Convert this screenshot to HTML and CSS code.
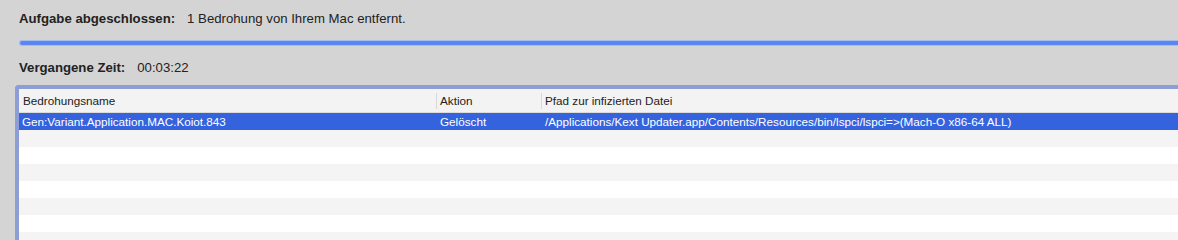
FILE: index.html
```html
<!DOCTYPE html>
<html lang="de">
  <head>
    <meta charset="UTF-8" />
    <title>Scan abgeschlossen</title>
    <link rel="stylesheet" href="styles.css">
  </head>
  <body>
    <div class="panel">
      <div class="line">
        <span class="label">Aufgabe abgeschlossen:</span>
        <span class="value">1 Bedrohung von Ihrem Mac entfernt.</span>
      </div>
      <div class="progress"><div class="fill"></div></div>
      <div class="line elapsed">
        <span class="label">Vergangene Zeit:</span>
        <span class="value">00:03:22</span>
      </div>
      <div class="table-wrap">
        <table class="results">
          <colgroup>
            <col class="c-name" />
            <col class="c-action" />
            <col />
          </colgroup>
          <thead>
            <tr>
              <th>Bedrohungsname</th>
              <th>Aktion</th>
              <th>Pfad zur infizierten Datei</th>
            </tr>
          </thead>
          <tbody>
            <tr class="selected">
              <td>Gen:Variant.Application.MAC.Koiot.843</td>
              <td>Gelöscht</td>
              <td>/Applications/Kext Updater.app/Contents/Resources/bin/lspci/lspci=&gt;(Mach-O x86-64 ALL)</td>
            </tr>
            <tr><td></td><td></td><td></td></tr>
            <tr><td></td><td></td><td></td></tr>
            <tr><td></td><td></td><td></td></tr>
            <tr><td></td><td></td><td></td></tr>
            <tr><td></td><td></td><td></td></tr>
            <tr><td></td><td></td><td></td></tr>
            <tr><td></td><td></td><td></td></tr>
          </tbody>
        </table>
      </div>
    </div>
  </body>
</html>
```

FILE: styles.css
```css
body {
  margin: 0;
  background: #d4d4d4;
  font-family: "Liberation Sans", Arial, sans-serif;
  color: #222;
  overflow: hidden;
}
.panel {
  padding-left: 19px;
}
.line {
  height: 36px;
  display: flex;
  align-items: center;
  gap: 12px;
  font-size: 13.2px;
}
.label {
  font-weight: bold;
}
.progress {
  margin-top: 4px;
  height: 6px;
  background: #5b86ee;
  border: 1px solid #a7bcef;
  border-right: none;
  border-radius: 4px 0 0 4px;
  box-sizing: border-box;
}
.elapsed {
  margin-top: 4px;
  height: 35px;
}
.table-wrap {
  margin-left: -4px;
  border: 4px solid #8d9dd5;
  border-right: none;
  border-bottom: none;
  border-radius: 4px 0 0 0;
  background: #fff;
}
.results {
  width: 100%;
  border-collapse: collapse;
  table-layout: fixed;
  font-size: 11.7px;
}
.c-name {
  width: 417px;
}
.c-action {
  width: 105px;
}
.results th {
  height: 23px;
  padding: 0 4px;
  text-align: left;
  font-weight: normal;
  background: #f3f3f3;
  border-bottom: 1px solid #dcdcdc;
  color: #222;
}
.results th + th {
  background-image: linear-gradient(#d8d8d8, #d8d8d8);
  background-size: 1px 16px;
  background-position: 0 center;
  background-repeat: no-repeat;
}
.results td {
  height: 17px;
  padding: 0 4px 0 3px;
  white-space: nowrap;
}
.results td + td {
  padding-left: 4px;
}
.results tbody tr:nth-child(even) {
  background: #f4f4f4;
}
.results tr.selected {
  background: #3563dd;
  color: #fff;
}
```
